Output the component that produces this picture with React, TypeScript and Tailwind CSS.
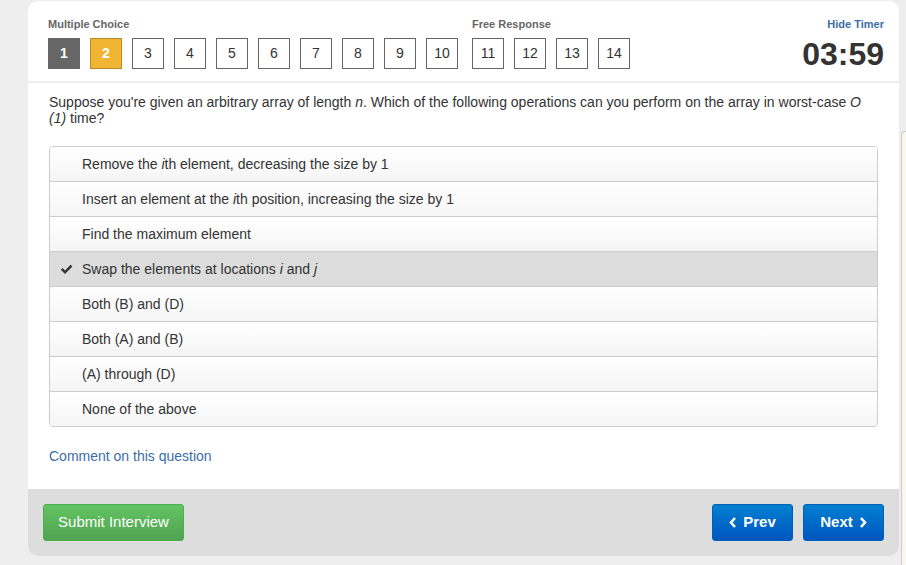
import React from "react";

const mc = [1, 2, 3, 4, 5, 6, 7, 8, 9, 10];
const fr = [11, 12, 13, 14];

const options: React.ReactNode[] = [
  <>Remove the <i>i</i>th element, decreasing the size by 1</>,
  <>Insert an element at the <i>i</i>th position, increasing the size by 1</>,
  <>Find the maximum element</>,
  <>Swap the elements at locations <i>i</i> and <i>j</i></>,
  <>Both (B) and (D)</>,
  <>Both (A) and (B)</>,
  <>(A) through (D)</>,
  <>None of the above</>,
];

function NumBox({ n }: { n: number }) {
  if (n === 1)
    return (
      <div className="flex h-[31px] w-[32px] items-center justify-center bg-[#666] text-[14px] font-bold text-white">
        {n}
      </div>
    );
  if (n === 2)
    return (
      <div className="flex h-[31px] w-[32px] items-center justify-center border border-[#b98a2a] bg-[#f1b534] text-[14px] font-bold text-white">
        {n}
      </div>
    );
  return (
    <div className="flex h-[31px] w-[32px] items-center justify-center border border-[#666] bg-white text-[14px] text-[#333]">
      {n}
    </div>
  );
}

export default function App() {
  return (
    <div
      className="flex h-[565px] w-[906px] bg-[#eee] pl-[28px] text-[#333]"
      style={{ fontFamily: '"Liberation Sans", Arial, sans-serif' }}
    >
      <div className="mt-[1px] flex h-[555px] w-[871px] flex-col overflow-hidden rounded-[10px] bg-white">
        {/* header */}
        <div className="flex h-[82px] border-b-2 border-[#eee] pl-[20px] pr-[15px] pt-[15px]">
          <div className="flex flex-col">
            <div className="text-[11px] font-bold text-[#666]">Multiple Choice</div>
            <div className="mt-[5px] flex gap-[10px]">
              {mc.map((n) => (
                <NumBox key={n} n={n} />
              ))}
            </div>
          </div>
          <div className="ml-[14px] flex flex-col">
            <div className="text-[11px] font-bold text-[#666]">Free Response</div>
            <div className="mt-[5px] flex gap-[10px]">
              {fr.map((n) => (
                <NumBox key={n} n={n} />
              ))}
            </div>
          </div>
          <div className="ml-auto flex flex-col items-end">
            <div className="text-[11px] font-bold text-[#3b6ea8]">Hide Timer</div>
            <div className="mt-[1px] text-[32px] leading-[40px] font-bold text-[#333]">03:59</div>
          </div>
        </div>

        {/* question */}
        <div className="flex-1 px-[21px] pt-[11px]">
          <p className="text-[14px] leading-[16px]">
            Suppose you're given an arbitrary array of length <i>n</i>. Which of the following
            operations can you perform on the array in worst-case <i>O</i> <i>(1)</i> time?
          </p>
          <div className="mt-[20px] overflow-hidden rounded-[4px] border border-[#ccc]">
            {options.map((o, i) => (
              <div
                key={i}
                className={`flex items-center text-[14px] ${i > 0 ? "h-[35px] border-t border-[#ccc]" : "h-[34px]"} ${
                  i === 3 ? "bg-[#ddd]" : "bg-gradient-to-b from-white to-[#f5f5f5]"
                }`}
              >
                <div className="flex w-[32px] justify-end pr-[9px]">
                  {i === 3 && (
                    <svg width="13" height="11" viewBox="0 0 13 11">
                      <path d="M0.8 5.8 L2.6 4 L5 6.4 L10.6 0.8 L12.4 2.6 L5 10 Z" fill="#333" />
                    </svg>
                  )}
                </div>
                <span>{o}</span>
              </div>
            ))}
          </div>
          <div className="mt-[19px] text-[14px] text-[#3b6ea8]">Comment on this question</div>
        </div>

        {/* footer */}
        <div className="flex h-[67px] items-center bg-[#ddd] px-[15px]">
          <button className="h-[37px] w-[141px] rounded-[3px] border border-[#4cae4c] bg-gradient-to-b from-[#62c462] to-[#51a351] text-[15px] text-white">
            Submit Interview
          </button>
          <div className="ml-auto flex gap-[10px]">
            <button className="flex h-[37px] w-[81px] items-center justify-center gap-[6px] rounded-[3px] border border-[#0060b6] bg-gradient-to-b from-[#0480d0] to-[#0055c0] text-[15px] font-bold text-white">
              <svg width="8" height="11" viewBox="0 0 8 11">
                <path d="M6 1 L2 5.5 L6 10" stroke="white" strokeWidth="2.6" fill="none" />
              </svg>
              Prev
            </button>
            <button className="flex h-[37px] w-[81px] items-center justify-center gap-[6px] rounded-[3px] border border-[#0060b6] bg-gradient-to-b from-[#0480d0] to-[#0055c0] text-[15px] font-bold text-white">
              Next
              <svg width="8" height="11" viewBox="0 0 8 11">
                <path d="M2 1 L6 5.5 L2 10" stroke="white" strokeWidth="2.6" fill="none" />
              </svg>
            </button>
          </div>
        </div>
      </div>
      <div className="ml-[2px] mt-[131px] h-[434px] flex-1 rounded-tl-[4px] border-l border-t border-[#ccc] bg-[#f7f7ea]" />
    </div>
  );
}
